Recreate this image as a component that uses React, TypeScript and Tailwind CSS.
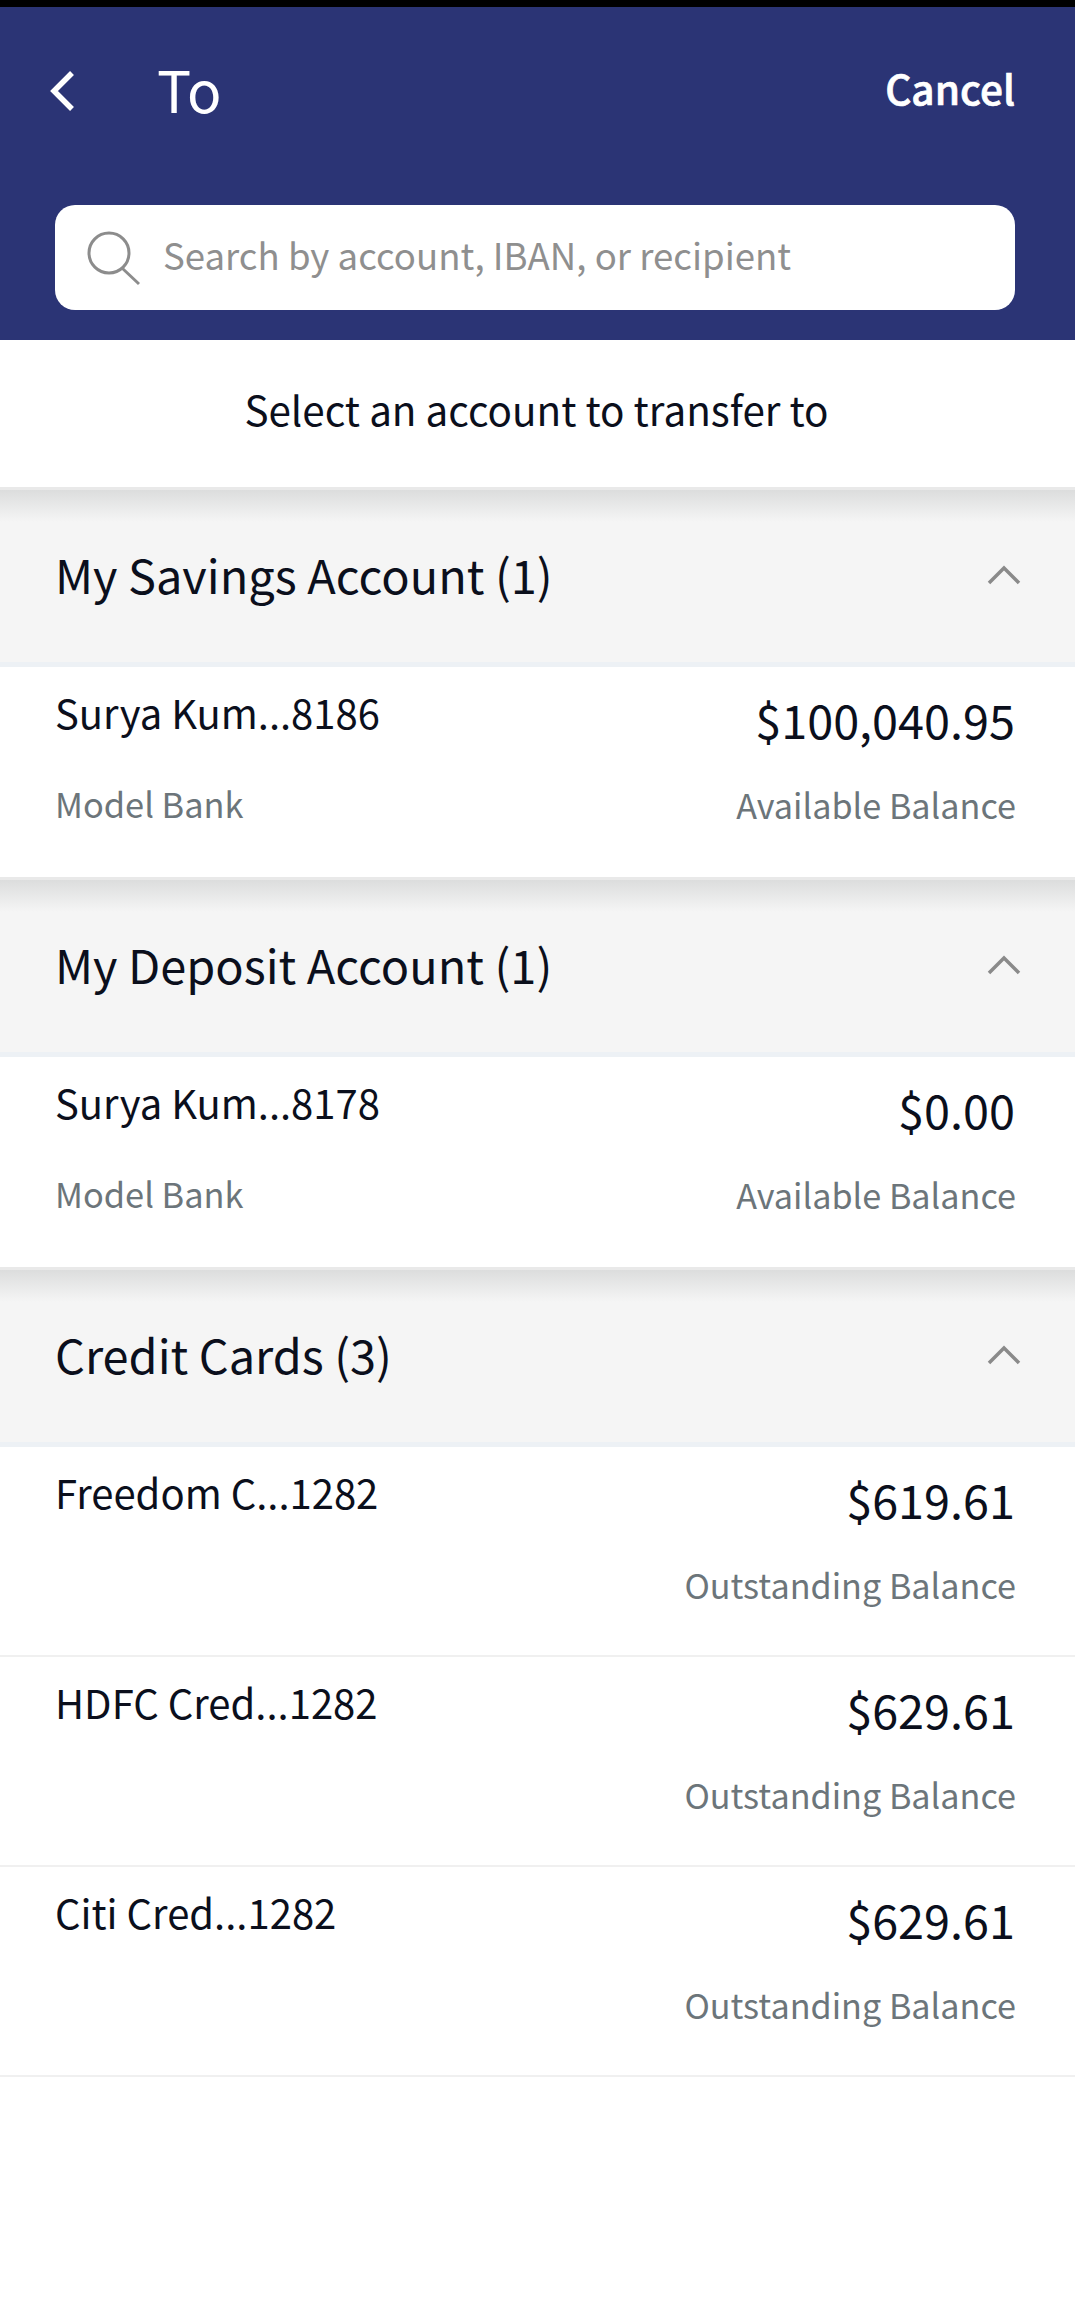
const font = { fontFamily: '"Noto Sans CJK SC", "Source Sans Pro", sans-serif' };

type Account = {
  name: string;
  bank?: string;
  amount: string;
  label: string;
};

type Section = {
  title: string;
  accounts: Account[];
};

const sections: Section[] = [
  {
    title: "My Savings Account (1)",
    accounts: [{ name: "Surya Kum...8186", bank: "Model Bank", amount: "$100,040.95", label: "Available Balance" }],
  },
  {
    title: "My Deposit Account (1)",
    accounts: [{ name: "Surya Kum...8178", bank: "Model Bank", amount: "$0.00", label: "Available Balance" }],
  },
  {
    title: "Credit Cards (3)",
    accounts: [
      { name: "Freedom C...1282", amount: "$619.61", label: "Outstanding Balance" },
      { name: "HDFC Cred...1282", amount: "$629.61", label: "Outstanding Balance" },
      { name: "Citi Cred...1282", amount: "$629.61", label: "Outstanding Balance" },
    ],
  },
];

function AccountRow({ account, divider }: { account: Account; divider: boolean }) {
  return (
    <div className={`flex h-[210px] justify-between pl-[55px] pr-[60px] pt-[24px] ${divider ? "border-b-2 border-[#f0f0f0]" : ""}`}>
      <div>
        <div className="h-[42px] text-[40px] leading-[42px] text-[#0b0f1c]">{account.name}</div>
        {account.bank && <div className="mt-[50px] text-[34.4px] leading-[40px] text-[#6c757a]">{account.bank}</div>}
      </div>
      <div className="text-right">
        <div className="mt-[6px] h-[44px] text-[46.8px] leading-[44px] text-[#0b0f1c]">{account.amount}</div>
        <div className="mt-[43px] mr-[-1px] text-[34.2px] leading-[40px] text-[#6c757a]">{account.label}</div>
      </div>
    </div>
  );
}

export default function App() {
  return (
    <div className="h-[2299px] w-[1075px] overflow-hidden bg-white" style={font}>
      <div className="h-[7px] bg-black" />
      <header className="h-[333px] bg-[#2b3475] px-[55px] pt-[48px]">
        <div className="flex h-[68px] items-center justify-between">
          <div className="flex items-center">
            <svg width="28" height="44" viewBox="0 0 28 44" fill="none" className="ml-[-7px] mt-[4px]">
              <path d="M24 4 L6 22 L24 40" stroke="white" strokeWidth="5.5" />
            </svg>
            <span className="ml-[81px] mb-[2px] text-[57px] leading-[68px] text-white">To</span>
          </div>
          <button type="button" className="mr-[5px] mb-[3px] text-[40.6px] leading-[52px] font-medium text-white [-webkit-text-stroke:0.7px_white]">
            Cancel
          </button>
        </div>
        <div className="mt-[82px] flex h-[105px] w-[960px] items-center rounded-[20px] bg-white pl-[31px]">
          <svg width="56" height="56" viewBox="0 0 56 56" fill="none">
            <circle cx="23" cy="23" r="20" stroke="#8c8c8c" strokeWidth="3" />
            <path d="M36 38 L53 54" stroke="#8c8c8c" strokeWidth="3" />
          </svg>
          <span className="mb-[6px] ml-[21px] text-[36.6px] leading-[50px] text-[#8f8f8f]">Search by account, IBAN, or recipient</span>
        </div>
      </header>

      <div className="flex h-[147px] items-center justify-center pr-[2px] pb-[9px] text-[40.4px] leading-[50px] text-[#0b0f1c]">
        Select an account to transfer to
      </div>

      {sections.map((section) => (
        <section key={section.title}>
          <div className="flex h-[175px] items-center justify-between border-t-[3px] border-[#e9e9e9] bg-[linear-gradient(to_bottom,#dcdddd_0px,#f5f5f5_32px)] pl-[55px] pr-[54px]">
            <h2 className="mt-[-5px] text-[46.9px] leading-[60px] font-normal text-[#0b0f1c]">{section.title}</h2>
            <svg width="34" height="20" viewBox="0 0 34 20" fill="none" className="mt-[-3px]">
              <path d="M2 18 L17 3 L32 18" stroke="#8a8a8a" strokeWidth="3.5" />
            </svg>
          </div>
          <div className="h-[5px] bg-[#edf1f5]" />
          {section.accounts.map((account) => (
            <AccountRow key={account.name} account={account} divider={section.accounts.length > 1} />
          ))}
        </section>
      ))}
    </div>
  );
}
